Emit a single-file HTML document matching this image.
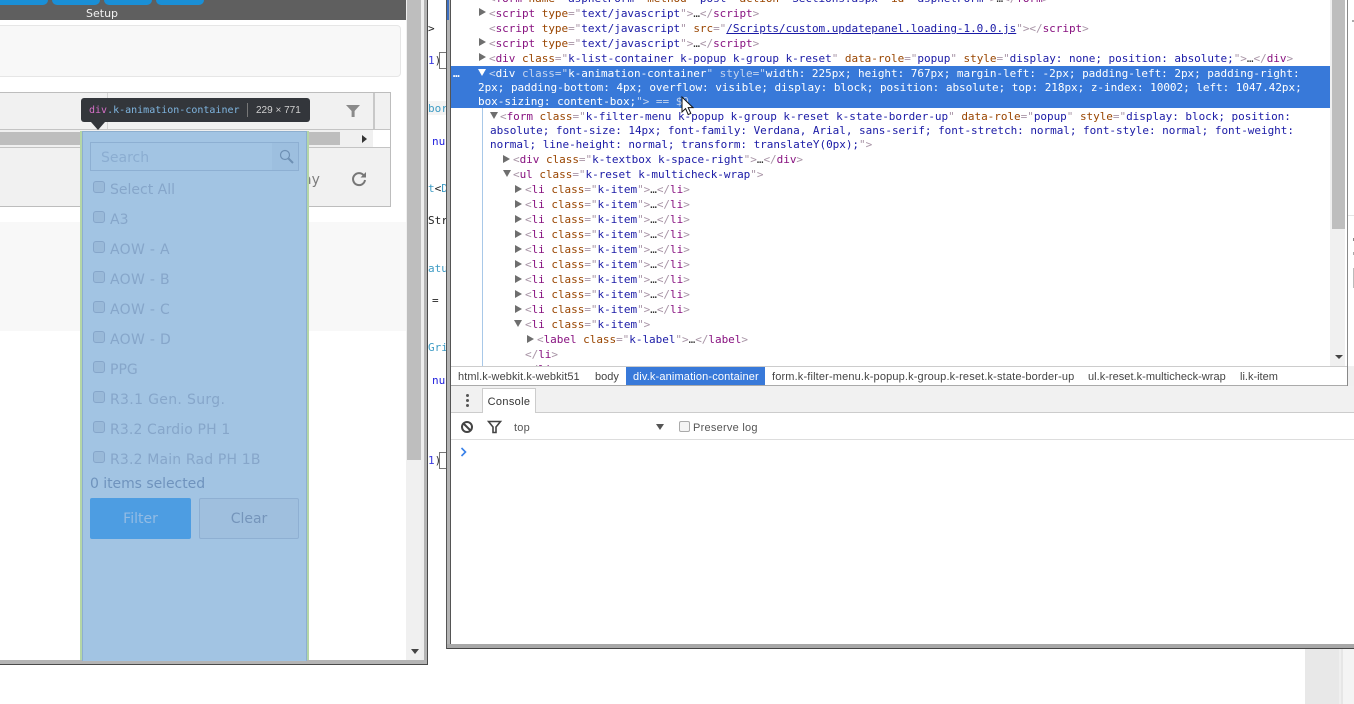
<!DOCTYPE html>
<html><head><meta charset="utf-8"><title>DevTools</title>
<style>
html,body{margin:0;padding:0;background:#fff;width:1354px;height:704px;overflow:hidden}
div,span.abs{position:absolute}
.box{position:absolute}
.m{position:absolute;font:11px/15px "DejaVu Sans Mono","Liberation Mono",monospace;white-space:pre;color:#222;margin-top:1px;letter-spacing:-0.033px}
.b{color:#a894a6}.t{color:#881280}.a{color:#994500}.v{color:#1a1aa6}
.l{color:#1a1aa6;text-decoration:underline}
.sel{color:#fff}.sel .q{color:#c4d4ee}
.r{position:absolute;width:0;height:0;border-left:7px solid #6e6e6e;border-top:4px solid transparent;border-bottom:4px solid transparent}
.d{position:absolute;width:0;height:0;border-top:7px solid #6e6e6e;border-left:4px solid transparent;border-right:4px solid transparent}
.i{position:absolute;left:110px;font:14px/18px "DejaVu Sans",Verdana,sans-serif;color:#86a6ca;white-space:pre;margin-top:1px}
.c{position:absolute;left:93px;width:10px;height:10px;border:1px solid #86a6ca;border-radius:3px;background:#9abad9}
.s{position:absolute;font:11px/18px "Liberation Sans",sans-serif;color:#444;white-space:pre;top:367px;margin-top:1px}
.f{position:absolute;font:11px/14px "DejaVu Sans Mono",monospace;white-space:pre;left:428px;margin-top:1px}
</style></head><body>

<!-- underlying window strip -->
<div class="box" style="left:427px;top:0;width:20px;height:648px;background:#fff;overflow:hidden">
<div class="box" style="left:0;top:101px;width:19px;height:14px;background:#f4f4f4"></div>
</div>
<div class="f" style="top:21px;color:#222">&gt;</div>
<div class="f" style="top:53px;color:#333"><span style="color:#3a3ae0">1</span>)</div>
<div class="box" style="left:439px;top:52px;width:6px;height:15px;border:1px solid #777;background:#fff"></div>
<div class="f" style="top:101px;color:#3d9bc4;left:428px;width:18px;overflow:hidden">bor</div>
<div class="f" style="top:134px;color:#2222dd;left:432px">nu</div>
<div class="f" style="top:181px;left:428px;color:#3d9bc4">t<span style="color:#222">&lt;</span>D</div>
<div class="f" style="top:213px;color:#222;width:18px;overflow:hidden">Str</div>
<div class="f" style="top:261px;color:#3d9bc4;width:18px;overflow:hidden">atu</div>
<div class="f" style="top:293px;left:432px;color:#222">=</div>
<div class="f" style="top:340px;color:#3d9bc4;width:18px;overflow:hidden">Gri</div>
<div class="f" style="top:373px;color:#2222dd;left:432px">nu</div>
<div class="f" style="top:453px;color:#333"><span style="color:#3a3ae0">1</span>)</div>
<div class="box" style="left:439px;top:452px;width:6px;height:15px;border:1px solid #777;background:#fff"></div>

<!-- left window -->
<div class="box" id="lw" style="left:0;top:0;width:424px;height:660px;background:#fff;overflow:hidden">
 <div class="box" style="left:0;top:0;width:407px;height:20px;background:#5f5f5f"></div>
 <div class="box" style="left:-10px;top:-10px;width:58px;height:15px;background:#1a8fd6;border-radius:5px"></div>
 <div class="box" style="left:52px;top:-10px;width:48px;height:15px;background:#1a8fd6;border-radius:5px"></div>
 <div class="box" style="left:104px;top:-10px;width:48px;height:15px;background:#1a8fd6;border-radius:5px"></div>
 <div class="box" style="left:156px;top:-10px;width:48px;height:15px;background:#1a8fd6;border-radius:5px"></div>
 <div class="box" style="left:86px;top:7px;font:11px/14px 'DejaVu Sans',sans-serif;color:#f2f2f2">Setup</div>

 <div class="box" style="left:-5px;top:25px;width:404px;height:50px;background:#f8f8f8;border:1px solid #e6e6e6;border-radius:4px"></div>

 <!-- grid -->
 <div class="box" style="left:-2px;top:92px;width:391px;height:113px;border:1px solid #bdbdbd;background:#f1f1f1"></div>
 <div class="box" style="left:0;top:129px;width:390px;height:1px;background:#c4c4c4"></div>
 <div class="box" style="left:0;top:130px;width:373px;height:17px;background:#f0f0f0"></div>
 <div class="box" style="left:373px;top:130px;width:17px;height:17px;background:#fff"></div>
 <div class="box" style="left:0;top:132px;width:340px;height:13px;background:#bebebe"></div>
 <div class="box" style="left:0;top:147px;width:390px;height:1px;background:#c4c4c4"></div>
 <div class="box" style="left:107px;top:93px;width:1px;height:36px;background:#d4d4d4"></div>
 <div class="box" style="left:373px;top:93px;width:2px;height:36px;background:#c8c8c8"></div>
 <div class="r" style="left:362px;top:135px;border-left:5px solid #333"></div>
 <svg class="box" style="position:absolute;left:345px;top:104px" width="16" height="14"><path d="M1 1H15L9.6 7V13H6.6V7Z" fill="#8a8a8a"/></svg>
 <div class="box" style="left:303px;top:171px;font:14px/18px 'DejaVu Sans',sans-serif;color:#7d7d7d">ay</div>
 <svg class="box" style="position:absolute;left:351px;top:171px" width="16" height="16" fill="none"><path d="M12.6 4.2A6 6 0 1 0 14 9" stroke="#777" stroke-width="2"/><path d="M9.5 6.5H15V1Z" fill="#777"/></svg>

 <div class="box" style="left:0;top:222px;width:407px;height:109px;background:#f8f8f8"></div>

 <!-- left scrollbar -->
 <div class="box" style="left:406px;top:0;width:15px;height:660px;background:#f0f0f0"></div>
 <div class="box" style="left:407px;top:0;width:14px;height:460px;background:#bebebe"></div>
 <div class="d" style="left:411px;top:649px;border-top:5px solid #444"></div>

 <!-- frame right -->
 <div class="box" style="left:421px;top:0;width:3px;height:660px;background:#eee"></div>
</div>
<div class="box" style="left:424px;top:0;width:3px;height:664px;background:#b4b4b4"></div>
<div class="box" style="left:427px;top:0;width:1px;height:665px;background:#4a4a4a"></div>
<div class="box" style="left:0;top:660px;width:427px;height:4px;background:#b4b4b4"></div>
<div class="box" style="left:0;top:664px;width:428px;height:1px;background:#4a4a4a"></div>

<!-- overlay -->
<div class="box" style="left:80px;top:131px;width:229px;height:529px;background:#b5d6a6"></div>
<div class="box" style="left:82px;top:131px;width:223px;height:529px;background:#a2c4e3;border:1px solid #8dafcf;border-bottom:0"></div>
<div class="box" style="left:90px;top:142px;width:207px;height:27px;border:1px solid #8dafd2"></div>
<div class="box" style="left:272px;top:143px;width:26px;height:27px;background:#9dbfdf"></div>
<div class="i" style="left:101px;top:148px;color:#8badd1">Search</div>
<svg style="position:absolute;left:279px;top:149px" width="16" height="16" fill="none"><circle cx="6" cy="6" r="4.5" stroke="#6e90b4" stroke-width="1.2"/><path d="M9.5 9.5L14 14" stroke="#6e90b4" stroke-width="2"/></svg>

<div class="c" style="top:181px"></div><div class="i" style="top:180px">Select All</div>
<div class="c" style="top:211px"></div><div class="i" style="top:210px">A3</div>
<div class="c" style="top:241px"></div><div class="i" style="top:240px;letter-spacing:.3px">AOW - A</div>
<div class="c" style="top:271px"></div><div class="i" style="top:270px;letter-spacing:.3px">AOW - B</div>
<div class="c" style="top:301px"></div><div class="i" style="top:300px;letter-spacing:.3px">AOW - C</div>
<div class="c" style="top:331px"></div><div class="i" style="top:330px;letter-spacing:.3px">AOW - D</div>
<div class="c" style="top:361px"></div><div class="i" style="top:360px">PPG</div>
<div class="c" style="top:391px"></div><div class="i" style="top:390px;letter-spacing:.33px">R3.1 Gen. Surg.</div>
<div class="c" style="top:421px"></div><div class="i" style="top:420px;letter-spacing:.12px">R3.2 Cardio PH 1</div>
<div class="c" style="top:451px"></div><div class="i" style="top:450px;letter-spacing:.16px">R3.2 Main Rad PH 1B</div>
<div class="i" style="left:90px;top:474px;color:#6f93bd;letter-spacing:-.05px">0 items selected</div>
<div class="box" style="left:90px;top:498px;width:101px;height:41px;background:#4d9de2;border-radius:2px;font:14px/43px 'DejaVu Sans',sans-serif;color:#93bce4;text-align:center">Filter</div>
<div class="box" style="left:199px;top:498px;width:98px;height:39px;background:#9fbfde;border:1px solid #8eafd2;border-radius:2px;font:14px/41px 'DejaVu Sans',sans-serif;color:#7595bb;text-align:center">Clear</div>

<!-- tooltip -->
<div class="box" style="left:81px;top:98px;width:229px;height:24px;background:#33363b;border-radius:3px"></div>
<div class="box" style="left:91px;top:122px;width:0;height:0;border-top:8px solid #33363b;border-left:7px solid transparent;border-right:7px solid transparent"></div>
<div class="box" style="left:89px;top:103px;font:10px/15px 'DejaVu Sans Mono',monospace;white-space:pre;color:#7fb5e0"><span style="color:#d670c8">div</span>.k-animation-container</div>
<div class="box" style="left:247px;top:103px;width:1px;height:14px;background:#777"></div>
<div class="box" style="left:256px;top:103px;font:10px/15px 'Liberation Sans',sans-serif;white-space:pre;color:#d0d0d0">229 × 771</div>

<!-- devtools frame -->
<div class="box" style="left:446px;top:0;width:908px;height:644px;background:#fff;overflow:hidden" id="dw">
 <div class="box" style="left:0;top:0;width:1px;height:644px;background:#555"></div>
 <div class="box" style="left:1px;top:0;width:3px;height:644px;background:#b4b4b4"></div>
 <div class="box" style="left:1px;top:0;width:2px;height:20px;background:#3d6fc0"></div>
 <div class="box" style="left:4px;top:0;width:1px;height:644px;background:#555"></div>
</div>
<div class="box" style="left:1347px;top:0;width:1px;height:386px;background:#888"></div>
<div class="box" style="left:447px;top:644px;width:907px;height:4px;background:#a8a8a8"></div>
<div class="box" style="left:447px;top:648px;width:907px;height:1px;background:#454545"></div>
<div class="box" style="left:446px;top:644px;width:1px;height:5px;background:#555"></div>

<!-- selected row -->
<div class="box" style="left:451px;top:66px;width:879px;height:42px;background:#3879d9"></div>
<div class="box" style="left:482px;top:108px;width:1px;height:258px;background:#a8c8e8"></div>

<!-- dom tree -->
<div class="box" style="left:450px;top:0;width:880px;height:366px;overflow:hidden">
<div class="m" style="left:39px;top:-10px"><span class="b">&lt;</span><span class="t">form</span> <span class="a">name</span><span class="b">="</span><span class="v">aspnetForm</span><span class="b">"</span> <span class="a">method</span><span class="b">="</span><span class="v">post</span><span class="b">"</span> <span class="a">action</span><span class="b">="</span><span class="v">Sections.aspx</span><span class="b">"</span> <span class="a">id</span><span class="b">="</span><span class="v">aspnetForm</span><span class="b">"&gt;</span><span style="color:#333">…</span><span class="b">&lt;/</span><span class="t">form</span><span class="b">&gt;</span></div>
<div class="m" style="left:39px;top:5px"><span class="b">&lt;</span><span class="t">script</span> <span class="a">type</span><span class="b">="</span><span class="v">text/javascript</span><span class="b">"&gt;</span><span style="color:#333">…</span><span class="b">&lt;/</span><span class="t">script</span><span class="b">&gt;</span></div>
<div class="m" style="left:39px;top:20px"><span class="b">&lt;</span><span class="t">script</span> <span class="a">type</span><span class="b">="</span><span class="v">text/javascript</span><span class="b">"</span> <span class="a">src</span><span class="b">="</span><span class="l">/Scripts/custom.updatepanel.loading-1.0.0.js</span><span class="b">"&gt;&lt;/</span><span class="t">script</span><span class="b">&gt;</span></div>
<div class="m" style="left:39px;top:35px"><span class="b">&lt;</span><span class="t">script</span> <span class="a">type</span><span class="b">="</span><span class="v">text/javascript</span><span class="b">"&gt;</span><span style="color:#333">…</span><span class="b">&lt;/</span><span class="t">script</span><span class="b">&gt;</span></div>
<div class="m" style="left:39px;top:50px"><span class="b">&lt;</span><span class="t">div</span> <span class="a">class</span><span class="b">="</span><span class="v">k-list-container k-popup k-group k-reset</span><span class="b">"</span> <span class="a">data-role</span><span class="b">="</span><span class="v">popup</span><span class="b">"</span> <span class="a">style</span><span class="b">="</span><span class="v">display: none; position: absolute;</span><span class="b">"&gt;</span><span style="color:#333">…</span><span class="b">&lt;/</span><span class="t">div</span><span class="b">&gt;</span></div>

<div class="m sel" style="left:39px;top:65px"><span class="q">&lt;</span>div <span class="q">class="</span>k-animation-container<span class="q">" style="</span>width: 225px; height: 767px; margin-left: -2px; padding-left: 2px; padding-right:</div>
<div class="m sel" style="left:28px;top:79px">2px; padding-bottom: 4px; overflow: visible; display: block; position: absolute; top: 218px; z-index: 10002; left: 1047.42px;</div>
<div class="m sel" style="left:28px;top:93px">box-sizing: content-box;<span class="q">"&gt; == $0</span></div>
<div class="m" style="left:3px;top:65px;color:#fff;font-weight:bold">…</div>

<div class="m" style="left:50px;top:108px"><span class="b">&lt;</span><span class="t">form</span> <span class="a">class</span><span class="b">="</span><span class="v">k-filter-menu k-popup k-group k-reset k-state-border-up</span><span class="b">"</span> <span class="a">data-role</span><span class="b">="</span><span class="v">popup</span><span class="b">"</span> <span class="a">style</span><span class="b">="</span><span class="v">display: block; position:</span></div>
<div class="m v" style="left:40px;top:122px;color:#1a1aa6">absolute; font-size: 14px; font-family: Verdana, Arial, sans-serif; font-stretch: normal; font-style: normal; font-weight:</div>
<div class="m v" style="left:40px;top:136px;color:#1a1aa6">normal; line-height: normal; transform: translateY(0px);<span class="b">"&gt;</span></div>
<div class="m" style="left:63px;top:151px"><span class="b">&lt;</span><span class="t">div</span> <span class="a">class</span><span class="b">="</span><span class="v">k-textbox k-space-right</span><span class="b">"&gt;</span><span style="color:#333">…</span><span class="b">&lt;/</span><span class="t">div</span><span class="b">&gt;</span></div>
<div class="m" style="left:63px;top:166px"><span class="b">&lt;</span><span class="t">ul</span> <span class="a">class</span><span class="b">="</span><span class="v">k-reset k-multicheck-wrap</span><span class="b">"&gt;</span></div>
<div class="m" style="left:75px;top:181px"><span class="b">&lt;</span><span class="t">li</span> <span class="a">class</span><span class="b">="</span><span class="v">k-item</span><span class="b">"&gt;</span><span style="color:#333">…</span><span class="b">&lt;/</span><span class="t">li</span><span class="b">&gt;</span></div>
<div class="m" style="left:75px;top:196px"><span class="b">&lt;</span><span class="t">li</span> <span class="a">class</span><span class="b">="</span><span class="v">k-item</span><span class="b">"&gt;</span><span style="color:#333">…</span><span class="b">&lt;/</span><span class="t">li</span><span class="b">&gt;</span></div>
<div class="m" style="left:75px;top:211px"><span class="b">&lt;</span><span class="t">li</span> <span class="a">class</span><span class="b">="</span><span class="v">k-item</span><span class="b">"&gt;</span><span style="color:#333">…</span><span class="b">&lt;/</span><span class="t">li</span><span class="b">&gt;</span></div>
<div class="m" style="left:75px;top:226px"><span class="b">&lt;</span><span class="t">li</span> <span class="a">class</span><span class="b">="</span><span class="v">k-item</span><span class="b">"&gt;</span><span style="color:#333">…</span><span class="b">&lt;/</span><span class="t">li</span><span class="b">&gt;</span></div>
<div class="m" style="left:75px;top:241px"><span class="b">&lt;</span><span class="t">li</span> <span class="a">class</span><span class="b">="</span><span class="v">k-item</span><span class="b">"&gt;</span><span style="color:#333">…</span><span class="b">&lt;/</span><span class="t">li</span><span class="b">&gt;</span></div>
<div class="m" style="left:75px;top:256px"><span class="b">&lt;</span><span class="t">li</span> <span class="a">class</span><span class="b">="</span><span class="v">k-item</span><span class="b">"&gt;</span><span style="color:#333">…</span><span class="b">&lt;/</span><span class="t">li</span><span class="b">&gt;</span></div>
<div class="m" style="left:75px;top:271px"><span class="b">&lt;</span><span class="t">li</span> <span class="a">class</span><span class="b">="</span><span class="v">k-item</span><span class="b">"&gt;</span><span style="color:#333">…</span><span class="b">&lt;/</span><span class="t">li</span><span class="b">&gt;</span></div>
<div class="m" style="left:75px;top:286px"><span class="b">&lt;</span><span class="t">li</span> <span class="a">class</span><span class="b">="</span><span class="v">k-item</span><span class="b">"&gt;</span><span style="color:#333">…</span><span class="b">&lt;/</span><span class="t">li</span><span class="b">&gt;</span></div>
<div class="m" style="left:75px;top:301px"><span class="b">&lt;</span><span class="t">li</span> <span class="a">class</span><span class="b">="</span><span class="v">k-item</span><span class="b">"&gt;</span><span style="color:#333">…</span><span class="b">&lt;/</span><span class="t">li</span><span class="b">&gt;</span></div>
<div class="m" style="left:75px;top:316px"><span class="b">&lt;</span><span class="t">li</span> <span class="a">class</span><span class="b">="</span><span class="v">k-item</span><span class="b">"&gt;</span></div>
<div class="m" style="left:87px;top:331px"><span class="b">&lt;</span><span class="t">label</span> <span class="a">class</span><span class="b">="</span><span class="v">k-label</span><span class="b">"&gt;</span><span style="color:#333">…</span><span class="b">&lt;/</span><span class="t">label</span><span class="b">&gt;</span></div>
<div class="m" style="left:75px;top:346px"><span class="b">&lt;/</span><span class="t">li</span><span class="b">&gt;</span></div>
<div class="m" style="left:75px;top:361px"><span class="b">&lt;/</span><span class="t">li</span><span class="b">&gt;</span></div>

<div class="r" style="left:29px;top:8px"></div>
<div class="r" style="left:29px;top:38px"></div>
<div class="r" style="left:29px;top:53px"></div>
<div class="d" style="left:28px;top:69px;border-top-color:#fff"></div>
<div class="d" style="left:40px;top:112px"></div>
<div class="r" style="left:53px;top:155px"></div>
<div class="d" style="left:53px;top:170px"></div>
<div class="r" style="left:65px;top:185px"></div>
<div class="r" style="left:65px;top:200px"></div>
<div class="r" style="left:65px;top:215px"></div>
<div class="r" style="left:65px;top:230px"></div>
<div class="r" style="left:65px;top:245px"></div>
<div class="r" style="left:65px;top:260px"></div>
<div class="r" style="left:65px;top:275px"></div>
<div class="r" style="left:65px;top:290px"></div>
<div class="r" style="left:65px;top:305px"></div>
<div class="d" style="left:64px;top:320px"></div>
<div class="r" style="left:77px;top:335px"></div>
</div>

<!-- dom scrollbar -->
<div class="box" style="left:1330px;top:0;width:15px;height:366px;background:#f0f0f0"></div>
<div class="box" style="left:1332px;top:0;width:13px;height:229px;background:#bebebe"></div>
<div class="d" style="left:1335px;top:355px;border-top:4px solid #444"></div>

<!-- breadcrumbs -->
<div class="box" style="left:451px;top:366px;width:896px;height:1px;background:#ccc"></div>
<div class="box" style="left:451px;top:385px;width:896px;height:1px;background:#aaa"></div>
<div class="box" style="left:626px;top:367px;width:139px;height:18px;background:#3879d9"></div>
<div class="s" style="left:458px;letter-spacing:.08px">html.k-webkit.k-webkit51</div>
<div class="s" style="left:595px">body</div>
<div class="s" style="left:633px;color:#fff;letter-spacing:.15px">div.k-animation-container</div>
<div class="s" style="left:772px;letter-spacing:.15px">form.k-filter-menu.k-popup.k-group.k-reset.k-state-border-up</div>
<div class="s" style="left:1088px;letter-spacing:.03px">ul.k-reset.k-multicheck-wrap</div>
<div class="s" style="left:1240px">li.k-item</div>

<!-- console -->
<div class="box" style="left:451px;top:386px;width:903px;height:26px;background:#f1f1f1"></div>
<div class="box" style="left:451px;top:412px;width:903px;height:1px;background:#ccc"></div>
<div class="box" style="left:451px;top:439px;width:903px;height:1px;background:#ddd"></div>
<div class="box" style="left:466px;top:394px;width:3px;height:3px;background:#555;border-radius:2px"></div>
<div class="box" style="left:466px;top:399px;width:3px;height:3px;background:#555;border-radius:2px"></div>
<div class="box" style="left:466px;top:404px;width:3px;height:3px;background:#555;border-radius:2px"></div>
<div class="box" style="left:482px;top:388px;width:52px;height:24px;background:#fff;border:1px solid #ccc;border-bottom:0;font:11px/26px 'Liberation Sans',sans-serif;color:#333;text-align:center;letter-spacing:.35px">Console</div>
<svg style="position:absolute;left:460px;top:420px" width="14" height="14" fill="none"><circle cx="7" cy="7" r="5" stroke="#444" stroke-width="2"/><path d="M3.5 3.5L10.5 10.5" stroke="#444" stroke-width="2"/></svg>
<svg style="position:absolute;left:487px;top:420px" width="16" height="14" fill="none"><path d="M1.5 1.5H13.5L9 7V12.5H6V7Z" stroke="#444" stroke-width="1.6"/></svg>
<div class="s" style="left:514px;top:418px;color:#555;letter-spacing:.2px">top</div>
<div class="d" style="left:656px;top:424px;border-top:6px solid #555"></div>
<div class="box" style="left:679px;top:421px;width:9px;height:9px;background:#f4f4f4;border:1px solid #aaa;border-radius:2px"></div>
<div class="s" style="left:693px;top:418px;color:#555;letter-spacing:.25px">Preserve log</div>
<svg style="position:absolute;left:460px;top:447px" width="8" height="10" fill="none"><path d="M1.5 1L5.5 5L1.5 9" stroke="#3880e8" stroke-width="1.6"/></svg>

<!-- right edge -->
<div class="box" style="left:1348px;top:366px;width:6px;height:20px;background:#f0f0f0"></div>
<div class="box" style="left:1352px;top:20px;width:2px;height:2px;background:#aaa"></div>
<div class="box" style="left:1353px;top:238px;width:1px;height:3px;background:#888"></div>
<div class="box" style="left:1353px;top:252px;width:1px;height:3px;background:#aaa"></div>
<div class="box" style="left:1353px;top:268px;width:1px;height:20px;background:#bbb"></div>
<div class="box" style="left:1348px;top:215px;width:6px;height:1px;background:#e4e4e4"></div>

<!-- bottom-right -->
<div class="box" style="left:1305px;top:649px;width:34px;height:55px;background:#e8e8e8"></div>
<div class="box" style="left:1339px;top:649px;width:2px;height:55px;background:#efefef"></div>
<div class="box" style="left:1341px;top:649px;width:2px;height:55px;background:#e6e6e6"></div>
<div class="box" style="left:1343px;top:649px;width:11px;height:55px;background:#f4f4f4"></div>

<!-- cursor -->
<svg style="position:absolute;left:681px;top:96px" width="15" height="21"><path d="M1 1V16L4.6 12.6L7.2 18.6L9.8 17.4L7.2 11.6H12Z" fill="#fff" stroke="#111" stroke-width="1"/></svg>

</body></html>
